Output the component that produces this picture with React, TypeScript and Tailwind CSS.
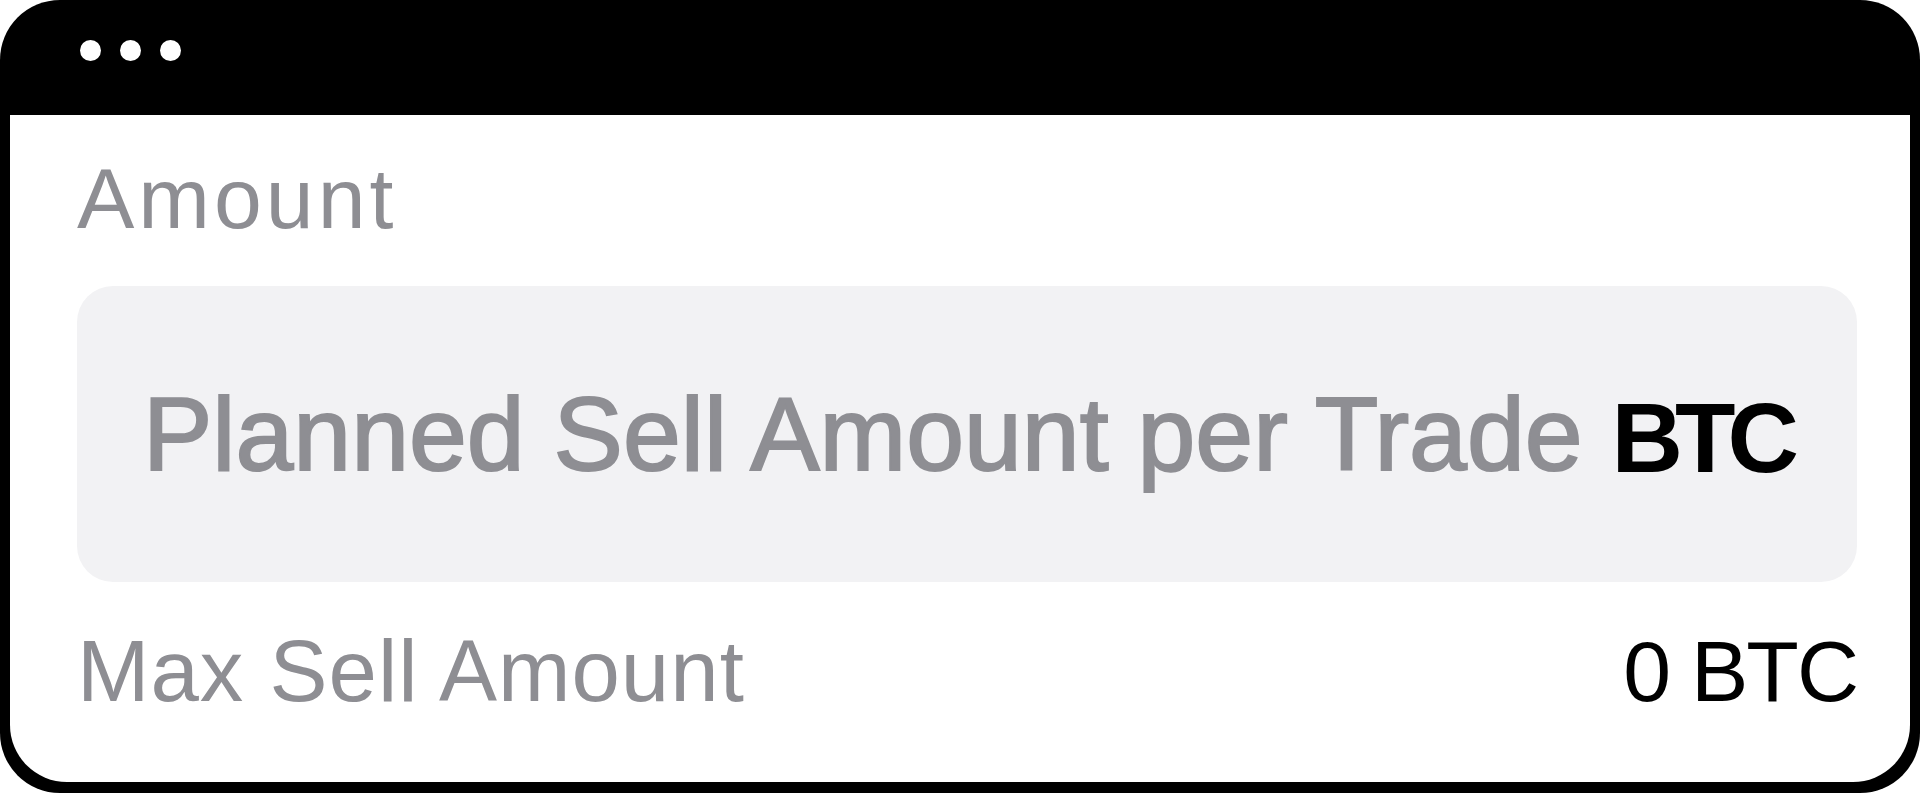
const font = { fontFamily: '"Liberation Sans", Arial, sans-serif' }

export default function App() {
  return (
    <div className="h-[793px] w-[1920px] bg-white" style={font}>
      {/* Window frame */}
      <div className="flex h-full w-full flex-col rounded-[60px] bg-black px-[10px] pb-[11px]">
        {/* Title bar */}
        <div className="flex h-[115px] shrink-0 gap-[19px] pl-[70px] pt-[40px]">
          <span className="h-[21px] w-[21px] rounded-full bg-white" />
          <span className="h-[21px] w-[21px] rounded-full bg-white" />
          <span className="h-[21px] w-[21px] rounded-full bg-white" />
        </div>

        {/* Content */}
        <div className="flex flex-1 flex-col rounded-b-[57px] bg-white pl-[67px] pr-[53px] pt-[40px]">
          <p className="text-[86px] leading-none tracking-[4px] text-[#8e8e93]">Amount</p>

          <div className="mt-[45px] flex h-[296px] items-center justify-center rounded-[36px] bg-[#f2f2f4]">
            <p className="whitespace-nowrap text-[104px] leading-none text-[#8e8e93] [-webkit-text-stroke:2px_#8e8e93]">
              Planned Sell Amount per Trade{' '}
              <span className="inline-block translate-y-[2px] text-[99px] font-bold tracking-[-8px] text-black [-webkit-text-stroke:0]">
                BTC
              </span>
            </p>
          </div>

          <div className="mt-[45px] flex items-center justify-between">
            <span className="text-[87px] leading-none tracking-[1px] text-[#8e8e93]">Max Sell Amount</span>
            <span className="text-[86px] leading-none tracking-[-2px] text-black">0 BTC</span>
          </div>
        </div>
      </div>
    </div>
  )
}
